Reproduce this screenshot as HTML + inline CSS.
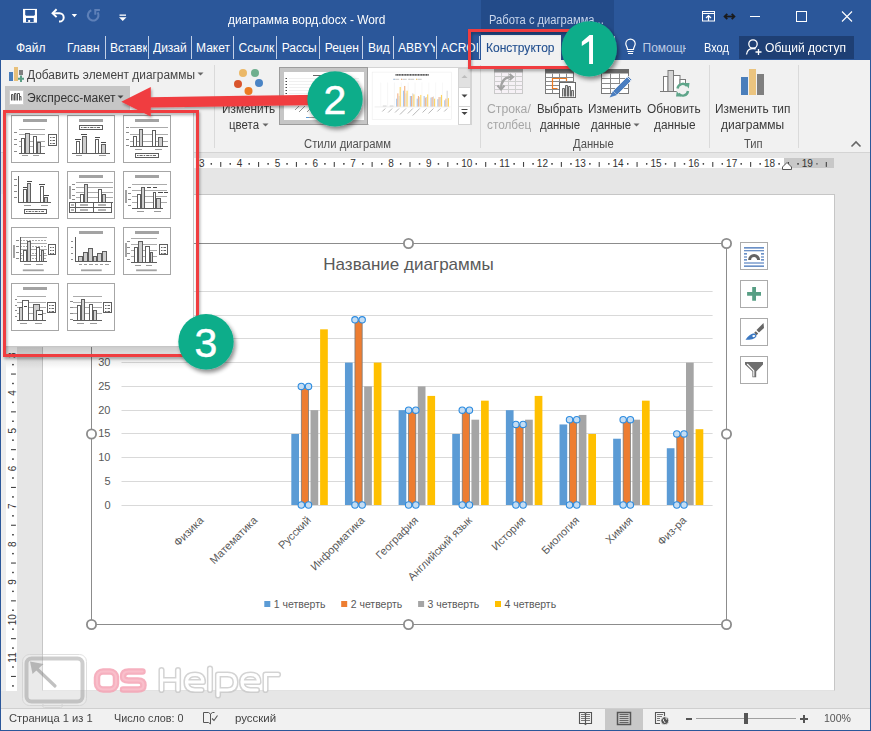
<!DOCTYPE html><html><head><meta charset="utf-8"><style>
html,body{margin:0;padding:0;}
body{width:871px;height:731px;overflow:hidden;position:relative;background:#E6E6E6;font-family:"Liberation Sans", sans-serif;}
.t{position:absolute;white-space:pre;line-height:1;font-family:"Liberation Sans", sans-serif;}
svg{position:absolute;overflow:visible;}
</style></head><body>
<div style="position:absolute;left:0px;top:0px;width:871px;height:60px;background:#2B579A;"></div><div style="position:absolute;left:481px;top:0px;width:133px;height:60px;background:#234B89;"></div><div class="t" style="left:489.4px;top:13.84px;font-size:12px;color:#C9D6EC;transform:scaleX(0.9293);transform-origin:0 0;">Работа с диаграмма...</div><div class="t" style="left:228px;top:13.84px;font-size:12px;color:#FFFFFF;transform:scaleX(0.9917);transform-origin:0 0;">диаграмма ворд.docx - Word</div><svg style="left:0px;top:0px;" width="140" height="35" viewBox="0 0 140 35">
<rect x="23" y="8.9" width="14" height="13.8" fill="#fff"/>
<path d="M25.2 10.1 H34.9 V14.8 L34 15.7 H26.1 L25.2 14.8Z" fill="#2B579A"/>
<path d="M26 18 H33.7 V21.9 H30.1 V20 H28.2 V21.9 H26Z" fill="#2B579A"/>
<path d="M53 13.2 H59.5 A4.2 4.2 0 0 1 59.5 21.6 H59" fill="none" stroke="#fff" stroke-width="2"/>
<path d="M56.6 9.3 L52.6 13.2 L56.6 17.1" fill="none" stroke="#fff" stroke-width="2"/>
<path d="M71.7 14 h5.4 l-2.7 3.2z" fill="#fff"/>
<path d="M91.3 10.3 A5.3 5.3 0 1 0 97.6 12.3" fill="none" stroke="#5E80B8" stroke-width="2.1"/>
<path d="M99.9 10 H95.3 V14.8" fill="none" stroke="#5E80B8" stroke-width="2"/>
<rect x="119.5" y="14.5" width="6.5" height="1.3" fill="#fff"/>
<path d="M119 17.3 h7.5 l-3.75 3.7z" fill="#fff"/>
</svg><svg style="left:690px;top:0px;" width="181" height="35" viewBox="0 0 181 35">
<rect x="12.5" y="11.5" width="12" height="9.5" fill="none" stroke="#fff" stroke-width="1"/>
<path d="M13 13.5 h11" stroke="#fff" stroke-width="1"/>
<path d="M18.5 21 v-5.5 M16 18 l2.5 -2.5 l2.5 2.5" fill="none" stroke="#fff" stroke-width="1.2"/>
<path d="M35.5 16.5 h8" stroke="#1a1a1a" stroke-width="1.8"/>
<path d="M37.3 13.8 l-2.7 2.7 l2.7 2.7 M41.7 13.8 l2.7 2.7 l-2.7 2.7" fill="none" stroke="#1a1a1a" stroke-width="1.8"/>
<path d="M60 16.5 h10" stroke="#fff" stroke-width="1"/>
<rect x="106.5" y="11.5" width="10" height="10" fill="none" stroke="#fff" stroke-width="1"/>
<path d="M152 11.5 l10 10 M162 11.5 l-10 10" stroke="#fff" stroke-width="1.1"/>
</svg><div class="t" style="left:16px;top:42.24px;font-size:12px;color:#fff;width:44px;overflow:hidden;">Файл</div><div class="t" style="left:67px;top:42.24px;font-size:12px;color:#fff;width:37px;overflow:hidden;">Главн</div><div class="t" style="left:110px;top:42.24px;font-size:12px;color:#fff;width:37px;overflow:hidden;">Вставк</div><div class="t" style="left:153px;top:42.24px;font-size:12px;color:#fff;width:37px;overflow:hidden;">Дизай</div><div class="t" style="left:196px;top:42.24px;font-size:12px;color:#fff;width:36px;overflow:hidden;">Макет</div><div class="t" style="left:238.6px;top:42.24px;font-size:12px;color:#fff;width:36.400000000000006px;overflow:hidden;">Ссылк</div><div class="t" style="left:281.7px;top:42.24px;font-size:12px;color:#fff;width:36.30000000000001px;overflow:hidden;">Рассы</div><div class="t" style="left:324.7px;top:42.24px;font-size:12px;color:#fff;width:36.30000000000001px;overflow:hidden;">Рецен</div><div class="t" style="left:368px;top:42.24px;font-size:12px;color:#fff;width:24px;overflow:hidden;">Вид</div><div class="t" style="left:398px;top:42.24px;font-size:12px;color:#fff;width:37px;overflow:hidden;">ABBYY</div><div class="t" style="left:441px;top:42.24px;font-size:12px;color:#fff;width:37px;overflow:hidden;">ACROI</div><div style="position:absolute;left:105px;top:36px;width:1px;height:23px;background:#C3D0E6;"></div><div style="position:absolute;left:148px;top:36px;width:1px;height:23px;background:#C3D0E6;"></div><div style="position:absolute;left:191px;top:36px;width:1px;height:23px;background:#C3D0E6;"></div><div style="position:absolute;left:233px;top:36px;width:1px;height:23px;background:#C3D0E6;"></div><div style="position:absolute;left:276px;top:36px;width:1px;height:23px;background:#C3D0E6;"></div><div style="position:absolute;left:319px;top:36px;width:1px;height:23px;background:#C3D0E6;"></div><div style="position:absolute;left:362px;top:36px;width:1px;height:23px;background:#C3D0E6;"></div><div style="position:absolute;left:393px;top:36px;width:1px;height:23px;background:#C3D0E6;"></div><div style="position:absolute;left:436px;top:36px;width:1px;height:23px;background:#C3D0E6;"></div><div style="position:absolute;left:479px;top:36px;width:1px;height:23px;background:#C3D0E6;"></div><div style="position:absolute;left:481px;top:35px;width:80px;height:25px;background:#F1F1F1;"></div><div style="position:absolute;left:561px;top:36px;width:1px;height:24px;background:#2A4C80;"></div><div style="position:absolute;left:614px;top:36px;width:1px;height:23px;background:#C3D0E6;"></div><div class="t" style="left:485.5px;top:42.24px;font-size:12px;color:#24508F;transform:scaleX(1.0012);transform-origin:0 0;-webkit-text-stroke:0.1px #24508F;">Конструктор</div><svg style="left:620px;top:36px;" width="20" height="22" viewBox="0 0 20 22">
<path d="M7.5 13.5 C7.5 11 5.8 10 5.8 7.8 A4.7 4.7 0 0 1 15.2 7.8 C15.2 10 13.5 11 13.5 13.5 Z" fill="none" stroke="#fff" stroke-width="1.2"/>
<path d="M7.5 15.5 h6 M8 17.5 h5" stroke="#fff" stroke-width="1.2"/>
</svg><div class="t" style="left:642.5px;top:42.24px;font-size:12px;color:#BFCDE5;width:43px;overflow:hidden;">Помощн</div><div class="t" style="left:704.2px;top:42.24px;font-size:12px;color:#fff;transform:scaleX(0.9173);transform-origin:0 0;">Вход</div><div style="position:absolute;left:739px;top:36px;width:115px;height:23px;background:#1E3F74;"></div><svg style="left:745px;top:38px;" width="20" height="20" viewBox="0 0 20 20">
<circle cx="8" cy="6" r="4.2" fill="none" stroke="#fff" stroke-width="1.3"/>
<path d="M1.5 16.5 C2 12.5 4.5 10.5 8 10.5 C9 10.5 10 10.7 10.8 11" fill="none" stroke="#fff" stroke-width="1.3"/>
<path d="M13.5 11 v6 M10.5 14 h6" stroke="#fff" stroke-width="1.3"/>
</svg><div class="t" style="left:765px;top:42.24px;font-size:12px;color:#fff;transform:scaleX(1.0047);transform-origin:0 0;">Общий доступ</div><div style="position:absolute;left:1px;top:60px;width:869px;height:92px;background:#F1F1F1;"></div><div style="position:absolute;left:1px;top:152px;width:869px;height:1px;background:#D4D4D4;"></div><div style="position:absolute;left:214px;top:65px;width:1px;height:83px;background:#DADADA;"></div><div style="position:absolute;left:480px;top:65px;width:1px;height:83px;background:#DADADA;"></div><div style="position:absolute;left:709px;top:65px;width:1px;height:83px;background:#DADADA;"></div><div style="position:absolute;left:798px;top:65px;width:1px;height:83px;background:#DADADA;"></div><svg style="left:8px;top:66px;" width="18" height="18" viewBox="0 0 18 18">
<rect x="1" y="6" width="4" height="9" fill="#4A7EBB"/>
<rect x="6" y="1" width="4" height="14" fill="#E8C07A"/>
<rect x="11" y="4" width="4" height="5" fill="#7F7F7F"/>
<path d="M13 9.5 v6.5 M10 12.8 h6" stroke="#5A9E85" stroke-width="2"/>
</svg><div class="t" style="left:26.5px;top:69.34px;font-size:12px;color:#444;transform:scaleX(0.9911);transform-origin:0 0;">Добавить элемент диаграммы</div><svg style="left:197px;top:72px;" width="8" height="5" viewBox="0 0 8 5"><path d="M0.5 0.5 h6 l-3 3z" fill="#666"/></svg><div style="position:absolute;left:5px;top:86px;width:125px;height:24px;background:#C6C6C6;"></div><div style="position:absolute;left:8.5px;top:89.5px;width:15px;height:15px;background:#fff;box-sizing:border-box;border:1px solid #D0D0D0;"></div><svg style="left:0px;top:0px;" width="100" height="120" viewBox="0 0 100 120">
<path d="M11.5 100.5 V94.5 H13 V100.5 M14.5 100.5 V93.5 H16 V100.5 M17.5 100.5 V93.5 H19.5 V100.5 M19.5 96.5 H21 V100.5" fill="none" stroke="#555" stroke-width="1"/>
</svg><div class="t" style="left:26.5px;top:92.04px;font-size:12px;color:#333;transform:scaleX(1.0065);transform-origin:0 0;">Экспресс-макет</div><svg style="left:117px;top:95px;" width="8" height="5" viewBox="0 0 8 5"><path d="M0.5 0.5 h6 l-3 3z" fill="#444"/></svg><svg style="left:230px;top:66px;" width="36" height="32" viewBox="0 0 36 32">
<circle cx="13" cy="7" r="4" fill="#EBB867"/>
<circle cx="25" cy="7" r="4" fill="#6FAF8E"/>
<circle cx="8" cy="18" r="4" fill="#D9542C"/>
<circle cx="29" cy="17" r="4" fill="#4A84C5"/>
<circle cx="18.5" cy="25" r="4" fill="#EC7A22"/>
</svg><div class="t" style="left:221.8px;top:102.84px;font-size:12px;color:#3A3A3A;transform:scaleX(0.9829);transform-origin:0 0;">Изменить</div><div class="t" style="left:229px;top:119.04px;font-size:12px;color:#3A3A3A;transform:scaleX(0.9547);transform-origin:0 0;">цвета</div><svg style="left:262px;top:123px;" width="8" height="5" viewBox="0 0 8 5"><path d="M0.5 0.5 h6 l-3 3z" fill="#666"/></svg><div style="position:absolute;left:278.5px;top:66.5px;width:193px;height:58.5px;background:#fff;box-sizing:border-box;border:1px solid #D4D4D4;"></div><div style="position:absolute;left:279px;top:66.5px;width:89px;height:58px;background:#C6C6C6;box-sizing:border-box;border:1px solid #9C9C9C;"></div><div style="position:absolute;left:284px;top:72px;width:80px;height:48px;background:#fff;"></div><div style="position:absolute;left:369px;top:67.5px;width:89px;height:57px;background:#fff;"></div><div style="position:absolute;left:457.5px;top:67.5px;width:13.5px;height:20px;background:#E1E1E1;box-sizing:border-box;border:1px solid #D4D4D4;"></div><div style="position:absolute;left:457.5px;top:87px;width:13.5px;height:19.5px;background:#fff;box-sizing:border-box;border:1px solid #D4D4D4;"></div><div style="position:absolute;left:457.5px;top:106px;width:13.5px;height:19px;background:#fff;box-sizing:border-box;border:1px solid #D4D4D4;"></div><svg style="left:458px;top:67px;" width="13" height="58" viewBox="0 0 13 58">
<path d="M3.5 11 l3 -3 l3 3z" fill="#BDBDBD"/>
<path d="M3.5 27.5 h6 l-3 3z" fill="#444"/>
<path d="M3.5 42.5 h6" stroke="#444" stroke-width="1"/>
<path d="M3.5 45 h6 l-3 3z" fill="#444"/>
</svg><svg style="left:0px;top:0px;" width="871" height="200" viewBox="0 0 871 200">
<path d="M285.5 78.5 h1.5 M285.5 81.5 h1.5 M285.5 84.5 h1.5 M285.5 87.5 h1.5 M285.5 90.5 h1.5 M285.5 93.5 h1.5" stroke="#444" stroke-width="1"/>
<path d="M289 78.5 h70 M289 81.5 h70 M289 84.5 h70 M289 87.5 h70 M289 90.5 h70 M289 93.5 h70" stroke="#F0F0F0" stroke-width="1"/>
<path d="M295 110 l4 -4 M299 112 l6 -6 M307 112 l4 -4" stroke="#777" stroke-width="0.8"/>
<path d="M306 117.5 h3" stroke="#5B9BD5" stroke-width="1"/><path d="M309 117.5 h8" stroke="#999" stroke-width="1"/>
<path d="M313 75.5 h20" stroke="#666" stroke-width="1"/>
</svg><svg style="left:0px;top:0px;" width="871" height="200" viewBox="0 0 871 200">
<rect x="372.2" y="72.1" width="79.4" height="47.4" fill="none" stroke="#EDEDED" stroke-width="0.6"/>
<path d="M395.5 74.9 H428.9" stroke="#555" stroke-width="1.6" stroke-dasharray="1.2 0.4"/>
<path d="M393.5 79.3 h1.2 M395.2 79.3 h4 M401 79.3 h1.2 M402.7 79.3 h4 M408.5 79.3 h1.2 M410.2 79.3 h4 M416 79.3 h1.2 M417.7 79.3 h4" stroke="#BBB" stroke-width="0.8"/>
<path d="M393.5 79.3 h1.2" stroke="#7FAEE0" stroke-width="0.9"/><path d="M401 79.3 h1.2" stroke="#F0A060" stroke-width="0.9"/><path d="M408.5 79.3 h1.2" stroke="#BBBBBB" stroke-width="0.9"/><path d="M416 79.3 h1.2" stroke="#FFC94A" stroke-width="0.9"/>
<path d="M374.6 106.9 H450.4" stroke="#DDD" stroke-width="0.5"/>
<path d="M380.70 82.5 V106.6" stroke="#F2F2F2" stroke-width="0.6"/><path d="M382.80 106 h3.8" stroke="#BBB" stroke-width="0.6"/><path d="M387.58 82.5 V106.6" stroke="#F2F2F2" stroke-width="0.6"/><path d="M389.68 106 h3.8" stroke="#BBB" stroke-width="0.6"/><path d="M394.46 82.5 V106.6" stroke="#F2F2F2" stroke-width="0.6"/><rect x="396.06" y="98.65" width="1.15" height="7.95" fill="#A9C8EC"/><rect x="397.26" y="93.35" width="1.15" height="13.25" fill="#F2B48A"/><rect x="398.46" y="96.00" width="1.15" height="10.60" fill="#D9D9D9"/><rect x="399.66" y="86.99" width="1.15" height="19.61" fill="#FFD45E"/><path d="M401.34 82.5 V106.6" stroke="#F2F2F2" stroke-width="0.6"/><rect x="402.94" y="90.70" width="1.15" height="15.90" fill="#A9C8EC"/><rect x="404.14" y="85.93" width="1.15" height="20.67" fill="#F2B48A"/><rect x="405.34" y="93.35" width="1.15" height="13.25" fill="#D9D9D9"/><rect x="406.54" y="90.70" width="1.15" height="15.90" fill="#FFD45E"/><path d="M408.21 82.5 V106.6" stroke="#F2F2F2" stroke-width="0.6"/><rect x="409.81" y="96.00" width="1.15" height="10.60" fill="#A9C8EC"/><rect x="411.01" y="96.00" width="1.15" height="10.60" fill="#F2B48A"/><rect x="412.21" y="93.35" width="1.15" height="13.25" fill="#D9D9D9"/><rect x="413.41" y="94.41" width="1.15" height="12.19" fill="#FFD45E"/><path d="M415.09 82.5 V106.6" stroke="#F2F2F2" stroke-width="0.6"/><rect x="416.69" y="98.65" width="1.15" height="7.95" fill="#A9C8EC"/><rect x="417.89" y="96.00" width="1.15" height="10.60" fill="#F2B48A"/><rect x="419.09" y="97.06" width="1.15" height="9.54" fill="#D9D9D9"/><rect x="420.29" y="94.94" width="1.15" height="11.66" fill="#FFD45E"/><path d="M421.97 82.5 V106.6" stroke="#F2F2F2" stroke-width="0.6"/><rect x="423.57" y="96.00" width="1.15" height="10.60" fill="#A9C8EC"/><rect x="424.77" y="97.59" width="1.15" height="9.01" fill="#F2B48A"/><rect x="425.97" y="97.06" width="1.15" height="9.54" fill="#D9D9D9"/><rect x="427.17" y="94.41" width="1.15" height="12.19" fill="#FFD45E"/><path d="M428.85 82.5 V106.6" stroke="#F2F2F2" stroke-width="0.6"/><rect x="430.45" y="97.59" width="1.15" height="9.01" fill="#A9C8EC"/><rect x="431.65" y="97.06" width="1.15" height="9.54" fill="#F2B48A"/><rect x="432.85" y="96.53" width="1.15" height="10.07" fill="#D9D9D9"/><rect x="434.05" y="98.65" width="1.15" height="7.95" fill="#FFD45E"/><path d="M435.73 82.5 V106.6" stroke="#F2F2F2" stroke-width="0.6"/><rect x="437.33" y="99.18" width="1.15" height="7.42" fill="#A9C8EC"/><rect x="438.53" y="97.06" width="1.15" height="9.54" fill="#F2B48A"/><rect x="439.73" y="97.06" width="1.15" height="9.54" fill="#D9D9D9"/><rect x="440.93" y="94.94" width="1.15" height="11.66" fill="#FFD45E"/><path d="M442.60 82.5 V106.6" stroke="#F2F2F2" stroke-width="0.6"/><rect x="444.20" y="100.24" width="1.15" height="6.36" fill="#A9C8EC"/><rect x="445.40" y="98.65" width="1.15" height="7.95" fill="#F2B48A"/><rect x="446.60" y="90.70" width="1.15" height="15.90" fill="#D9D9D9"/><rect x="447.80" y="98.12" width="1.15" height="8.48" fill="#FFD45E"/><path d="M385.30 108.5 l-3.0 3.0" stroke="#9A9A9A" stroke-width="0.7"/><path d="M392.18 108.5 l-4.0 4.0" stroke="#9A9A9A" stroke-width="0.7"/><path d="M399.06 108.5 l-4.0 4.0" stroke="#9A9A9A" stroke-width="0.7"/><path d="M405.94 108.5 l-6.0 6.0" stroke="#9A9A9A" stroke-width="0.7"/><path d="M412.81 108.5 l-5.0 5.0" stroke="#9A9A9A" stroke-width="0.7"/><path d="M419.69 108.5 l-7.0 7.0" stroke="#9A9A9A" stroke-width="0.7"/><path d="M426.57 108.5 l-4.0 4.0" stroke="#9A9A9A" stroke-width="0.7"/><path d="M433.45 108.5 l-5.0 5.0" stroke="#9A9A9A" stroke-width="0.7"/><path d="M440.33 108.5 l-3.0 3.0" stroke="#9A9A9A" stroke-width="0.7"/><path d="M447.20 108.5 l-3.0 3.0" stroke="#9A9A9A" stroke-width="0.7"/>
</svg><div style="position:absolute;left:457.5px;top:67px;width:0px;height:0px;background:#fff;"></div><div class="t" style="left:303.7px;top:138.04px;font-size:12px;color:#505050;transform:scaleX(0.9405);transform-origin:0 0;">Стили диаграмм</div><svg style="left:0px;top:0px;" width="871" height="200" viewBox="0 0 871 200">
<rect x="494.5" y="69.5" width="28" height="24" fill="#F6F1F6" stroke="#C9C9C9" stroke-width="1"/>
<rect x="494" y="69" width="29" height="3.5" fill="#A8A8A8"/>
<path d="M494.5 76.5 H522.5 M494.5 81.5 H522.5 M494.5 85.5 H522.5 M494.5 89.5 H522.5 M501.5 72.5 V93.5 M508.5 72.5 V93.5 M515.5 72.5 V93.5" stroke="#CFCFCF" stroke-width="1"/>
<path d="M501 89 C501 81 505 77 511.5 77" fill="none" stroke="#A3A3A3" stroke-width="2.2"/>
<path d="M509.5 74 L513 77 L509.5 80" fill="none" stroke="#A3A3A3" stroke-width="2"/>
<path d="M497.5 85.5 L501 89.5 L504.5 85.5" fill="none" stroke="#A3A3A3" stroke-width="2"/>
</svg><div class="t" style="left:487px;top:102.84px;font-size:12px;color:#A6A6A6;transform:scaleX(1.0179);transform-origin:0 0;">Строка/</div><div class="t" style="left:486.6px;top:118.84px;font-size:12px;color:#A6A6A6;transform:scaleX(0.9810);transform-origin:0 0;">столбец</div><svg style="left:0px;top:0px;" width="871" height="200" viewBox="0 0 871 200">
<rect x="545.5" y="69.5" width="28" height="24" fill="#fff" stroke="#7A7A7A" stroke-width="1"/>
<rect x="545" y="69" width="29" height="4.5" fill="#6A6A6A"/>
<path d="M545.5 77.5 H573.5 M545.5 81.5 H573.5 M545.5 85.5 H573.5 M545.5 89.5 H573.5 M552.5 73.5 V93.5 M559.5 73.5 V93.5 M566.5 73.5 V93.5" stroke="#8A8A8A" stroke-width="1"/>
<path d="M557.5 88.5 H552.5 V78.5 H566.5 V81" fill="none" stroke="#EC7A22" stroke-width="1.2"/>
<rect x="559.5" y="82.5" width="16" height="15" fill="#fff" stroke="#6A6A6A" stroke-width="1"/>
<path d="M562.5 96.5 V88.5 H564.5 V96.5 M565.5 96.5 V85.5 H567.5 V96.5 M568.5 96.5 V86.5 H570.5 V96.5 M571.5 96.5 V90.5 H573.5 V96.5" fill="#D0D0D0" stroke="#6A6A6A" stroke-width="1"/>
</svg><div class="t" style="left:536.6px;top:102.84px;font-size:12px;color:#3A3A3A;transform:scaleX(0.9497);transform-origin:0 0;">Выбрать</div><div class="t" style="left:539.5px;top:118.84px;font-size:12px;color:#3A3A3A;transform:scaleX(0.9497);transform-origin:0 0;">данные</div><svg style="left:0px;top:0px;" width="871" height="200" viewBox="0 0 871 200">
<rect x="601.5" y="69.5" width="27" height="24" fill="#fff" stroke="#7A7A7A" stroke-width="1"/>
<rect x="601" y="69" width="28" height="4.5" fill="#6A6A6A"/>
<path d="M601.5 78.5 H628.5 M601.5 83.5 H628.5 M601.5 88.5 H628.5 M610.5 73.5 V93.5 M619.5 73.5 V93.5" stroke="#8A8A8A" stroke-width="1"/>
<path d="M613 91 L628 76 L632 80 L617 95 Z" fill="#4A7EC0" stroke="#F1F1F1" stroke-width="0.8"/>
<path d="M613 91 L617 95 L609.6 97.6 Z" fill="#4A7EC0"/>
<path d="M627 77 L631 81" stroke="#fff" stroke-width="0.8"/>
</svg><div class="t" style="left:588.3px;top:102.84px;font-size:12px;color:#3A3A3A;transform:scaleX(0.9847);transform-origin:0 0;">Изменить</div><div class="t" style="left:591px;top:118.84px;font-size:12px;color:#3A3A3A;transform:scaleX(0.9497);transform-origin:0 0;">данные</div><svg style="left:633px;top:123px;" width="8" height="5" viewBox="0 0 8 5"><path d="M0.5 0.5 h6 l-3 3z" fill="#666"/></svg><svg style="left:0px;top:0px;" width="871" height="200" viewBox="0 0 871 200">
<rect x="663.5" y="76.5" width="4.5" height="15" fill="#fff" stroke="#7A7A7A" stroke-width="1"/>
<rect x="668" y="70.5" width="5.5" height="21" fill="#D4D4D4" stroke="#7A7A7A" stroke-width="1"/>
<rect x="673.5" y="75.5" width="6.5" height="16" fill="#fff" stroke="#7A7A7A" stroke-width="1"/>
<rect x="680" y="79.5" width="5.5" height="12" fill="#fff" stroke="#7A7A7A" stroke-width="1"/>
<path d="M660 91.5 H680" stroke="#7A7A7A" stroke-width="1"/>
<circle cx="682.8" cy="89.8" r="6.5" fill="#F1F1F1"/>
<path d="M677.5 88.5 A5.3 5.3 0 0 1 687 86" fill="none" stroke="#5FA58A" stroke-width="2.4"/>
<path d="M688 91 A5.3 5.3 0 0 1 678.6 93.6" fill="none" stroke="#5FA58A" stroke-width="2.4"/>
<path d="M684.5 83 L689.5 83 L688.8 88.5 Z" fill="#5FA58A"/>
<path d="M681 96.6 L676 96.6 L676.8 91.2 Z" fill="#5FA58A"/>
</svg><div class="t" style="left:647.4px;top:102.84px;font-size:12px;color:#3A3A3A;transform:scaleX(0.9865);transform-origin:0 0;">Обновить</div><div class="t" style="left:653.7px;top:118.84px;font-size:12px;color:#3A3A3A;transform:scaleX(0.9852);transform-origin:0 0;">данные</div><div class="t" style="left:573.3px;top:138.04px;font-size:12px;color:#505050;transform:scaleX(0.9389);transform-origin:0 0;">Данные</div><div style="position:absolute;left:741px;top:77px;width:7px;height:18px;background:#4A7EBB;"></div><div style="position:absolute;left:749px;top:69px;width:7px;height:26px;background:#EBC47F;"></div><div style="position:absolute;left:757px;top:74px;width:7px;height:21px;background:#7F7F7F;"></div><div class="t" style="left:715.3px;top:103.24px;font-size:12px;color:#3A3A3A;transform:scaleX(0.9901);transform-origin:0 0;">Изменить тип</div><div class="t" style="left:721.2px;top:119.04px;font-size:12px;color:#3A3A3A;transform:scaleX(0.9996);transform-origin:0 0;">диаграммы</div><div class="t" style="left:744.2px;top:138.04px;font-size:12px;color:#505050;transform:scaleX(0.9298);transform-origin:0 0;">Тип</div><svg style="left:850px;top:140px;" width="12" height="8" viewBox="0 0 12 8"><path d="M1.5 6.5 l4.5 -4.5 l4.5 4.5" fill="none" stroke="#666" stroke-width="1.6"/></svg><div style="position:absolute;left:42px;top:158px;width:742px;height:10px;background:#FFFFFF;"></div><div style="position:absolute;left:784px;top:158px;width:50px;height:10px;background:#C8C8C8;"></div><svg style="left:0px;top:0px;" width="871" height="200" viewBox="0 0 871 200"><rect x="59.31" y="163.2" width="1.3" height="1.3" fill="#444"/><rect x="78.24" y="163.2" width="1.3" height="1.3" fill="#444"/><rect x="97.16" y="163.2" width="1.3" height="1.3" fill="#444"/><rect x="116.09" y="163.2" width="1.3" height="1.3" fill="#444"/><rect x="106.62" y="162" width="1.1" height="4.9" fill="#444"/><text font-family="Liberation Sans" x="126.05" y="167" text-anchor="middle" font-size="10" fill="#333">1</text><rect x="97.16" y="163.2" width="1.3" height="1.3" fill="#444"/><rect x="116.09" y="163.2" width="1.3" height="1.3" fill="#444"/><rect x="135.01" y="163.2" width="1.3" height="1.3" fill="#444"/><rect x="153.94" y="163.2" width="1.3" height="1.3" fill="#444"/><rect x="144.48" y="162" width="1.1" height="4.9" fill="#444"/><text font-family="Liberation Sans" x="163.90" y="167" text-anchor="middle" font-size="10" fill="#333">2</text><rect x="135.01" y="163.2" width="1.3" height="1.3" fill="#444"/><rect x="153.94" y="163.2" width="1.3" height="1.3" fill="#444"/><rect x="172.86" y="163.2" width="1.3" height="1.3" fill="#444"/><rect x="191.79" y="163.2" width="1.3" height="1.3" fill="#444"/><rect x="182.33" y="162" width="1.1" height="4.9" fill="#444"/><text font-family="Liberation Sans" x="201.75" y="167" text-anchor="middle" font-size="10" fill="#333">3</text><rect x="172.86" y="163.2" width="1.3" height="1.3" fill="#444"/><rect x="191.79" y="163.2" width="1.3" height="1.3" fill="#444"/><rect x="210.71" y="163.2" width="1.3" height="1.3" fill="#444"/><rect x="229.64" y="163.2" width="1.3" height="1.3" fill="#444"/><rect x="220.18" y="162" width="1.1" height="4.9" fill="#444"/><text font-family="Liberation Sans" x="239.60" y="167" text-anchor="middle" font-size="10" fill="#333">4</text><rect x="210.71" y="163.2" width="1.3" height="1.3" fill="#444"/><rect x="229.64" y="163.2" width="1.3" height="1.3" fill="#444"/><rect x="248.56" y="163.2" width="1.3" height="1.3" fill="#444"/><rect x="267.49" y="163.2" width="1.3" height="1.3" fill="#444"/><rect x="258.03" y="162" width="1.1" height="4.9" fill="#444"/><text font-family="Liberation Sans" x="277.45" y="167" text-anchor="middle" font-size="10" fill="#333">5</text><rect x="248.56" y="163.2" width="1.3" height="1.3" fill="#444"/><rect x="267.49" y="163.2" width="1.3" height="1.3" fill="#444"/><rect x="286.41" y="163.2" width="1.3" height="1.3" fill="#444"/><rect x="305.34" y="163.2" width="1.3" height="1.3" fill="#444"/><rect x="295.88" y="162" width="1.1" height="4.9" fill="#444"/><text font-family="Liberation Sans" x="315.30" y="167" text-anchor="middle" font-size="10" fill="#333">6</text><rect x="286.41" y="163.2" width="1.3" height="1.3" fill="#444"/><rect x="305.34" y="163.2" width="1.3" height="1.3" fill="#444"/><rect x="324.26" y="163.2" width="1.3" height="1.3" fill="#444"/><rect x="343.19" y="163.2" width="1.3" height="1.3" fill="#444"/><rect x="333.73" y="162" width="1.1" height="4.9" fill="#444"/><text font-family="Liberation Sans" x="353.15" y="167" text-anchor="middle" font-size="10" fill="#333">7</text><rect x="324.26" y="163.2" width="1.3" height="1.3" fill="#444"/><rect x="343.19" y="163.2" width="1.3" height="1.3" fill="#444"/><rect x="362.11" y="163.2" width="1.3" height="1.3" fill="#444"/><rect x="381.04" y="163.2" width="1.3" height="1.3" fill="#444"/><rect x="371.58" y="162" width="1.1" height="4.9" fill="#444"/><text font-family="Liberation Sans" x="391.00" y="167" text-anchor="middle" font-size="10" fill="#333">8</text><rect x="362.11" y="163.2" width="1.3" height="1.3" fill="#444"/><rect x="381.04" y="163.2" width="1.3" height="1.3" fill="#444"/><rect x="399.96" y="163.2" width="1.3" height="1.3" fill="#444"/><rect x="418.89" y="163.2" width="1.3" height="1.3" fill="#444"/><rect x="409.43" y="162" width="1.1" height="4.9" fill="#444"/><text font-family="Liberation Sans" x="428.85" y="167" text-anchor="middle" font-size="10" fill="#333">9</text><rect x="399.96" y="163.2" width="1.3" height="1.3" fill="#444"/><rect x="418.89" y="163.2" width="1.3" height="1.3" fill="#444"/><rect x="437.81" y="163.2" width="1.3" height="1.3" fill="#444"/><rect x="456.74" y="163.2" width="1.3" height="1.3" fill="#444"/><rect x="447.28" y="162" width="1.1" height="4.9" fill="#444"/><text font-family="Liberation Sans" x="466.70" y="167" text-anchor="middle" font-size="10" fill="#333">10</text><rect x="437.81" y="163.2" width="1.3" height="1.3" fill="#444"/><rect x="456.74" y="163.2" width="1.3" height="1.3" fill="#444"/><rect x="475.66" y="163.2" width="1.3" height="1.3" fill="#444"/><rect x="494.59" y="163.2" width="1.3" height="1.3" fill="#444"/><rect x="485.13" y="162" width="1.1" height="4.9" fill="#444"/><text font-family="Liberation Sans" x="504.55" y="167" text-anchor="middle" font-size="10" fill="#333">11</text><rect x="475.66" y="163.2" width="1.3" height="1.3" fill="#444"/><rect x="494.59" y="163.2" width="1.3" height="1.3" fill="#444"/><rect x="513.51" y="163.2" width="1.3" height="1.3" fill="#444"/><rect x="532.44" y="163.2" width="1.3" height="1.3" fill="#444"/><rect x="522.98" y="162" width="1.1" height="4.9" fill="#444"/><text font-family="Liberation Sans" x="542.40" y="167" text-anchor="middle" font-size="10" fill="#333">12</text><rect x="513.51" y="163.2" width="1.3" height="1.3" fill="#444"/><rect x="532.44" y="163.2" width="1.3" height="1.3" fill="#444"/><rect x="551.36" y="163.2" width="1.3" height="1.3" fill="#444"/><rect x="570.29" y="163.2" width="1.3" height="1.3" fill="#444"/><rect x="560.83" y="162" width="1.1" height="4.9" fill="#444"/><text font-family="Liberation Sans" x="580.25" y="167" text-anchor="middle" font-size="10" fill="#333">13</text><rect x="551.36" y="163.2" width="1.3" height="1.3" fill="#444"/><rect x="570.29" y="163.2" width="1.3" height="1.3" fill="#444"/><rect x="589.21" y="163.2" width="1.3" height="1.3" fill="#444"/><rect x="608.14" y="163.2" width="1.3" height="1.3" fill="#444"/><rect x="598.67" y="162" width="1.1" height="4.9" fill="#444"/><text font-family="Liberation Sans" x="618.10" y="167" text-anchor="middle" font-size="10" fill="#333">14</text><rect x="589.21" y="163.2" width="1.3" height="1.3" fill="#444"/><rect x="608.14" y="163.2" width="1.3" height="1.3" fill="#444"/><rect x="627.06" y="163.2" width="1.3" height="1.3" fill="#444"/><rect x="645.99" y="163.2" width="1.3" height="1.3" fill="#444"/><rect x="636.52" y="162" width="1.1" height="4.9" fill="#444"/><text font-family="Liberation Sans" x="655.95" y="167" text-anchor="middle" font-size="10" fill="#333">15</text><rect x="627.06" y="163.2" width="1.3" height="1.3" fill="#444"/><rect x="645.99" y="163.2" width="1.3" height="1.3" fill="#444"/><rect x="664.91" y="163.2" width="1.3" height="1.3" fill="#444"/><rect x="683.84" y="163.2" width="1.3" height="1.3" fill="#444"/><rect x="674.38" y="162" width="1.1" height="4.9" fill="#444"/><text font-family="Liberation Sans" x="693.80" y="167" text-anchor="middle" font-size="10" fill="#333">16</text><rect x="664.91" y="163.2" width="1.3" height="1.3" fill="#444"/><rect x="683.84" y="163.2" width="1.3" height="1.3" fill="#444"/><rect x="702.76" y="163.2" width="1.3" height="1.3" fill="#444"/><rect x="721.69" y="163.2" width="1.3" height="1.3" fill="#444"/><rect x="712.22" y="162" width="1.1" height="4.9" fill="#444"/><text font-family="Liberation Sans" x="731.65" y="167" text-anchor="middle" font-size="10" fill="#333">17</text><rect x="702.76" y="163.2" width="1.3" height="1.3" fill="#444"/><rect x="721.69" y="163.2" width="1.3" height="1.3" fill="#444"/><rect x="740.61" y="163.2" width="1.3" height="1.3" fill="#444"/><rect x="759.54" y="163.2" width="1.3" height="1.3" fill="#444"/><rect x="750.08" y="162" width="1.1" height="4.9" fill="#444"/><text font-family="Liberation Sans" x="769.50" y="167" text-anchor="middle" font-size="10" fill="#333">18</text><rect x="740.61" y="163.2" width="1.3" height="1.3" fill="#444"/><rect x="759.54" y="163.2" width="1.3" height="1.3" fill="#444"/><rect x="778.46" y="163.2" width="1.3" height="1.3" fill="#444"/><rect x="797.39" y="163.2" width="1.3" height="1.3" fill="#444"/><rect x="787.92" y="162" width="1.1" height="4.9" fill="#444"/><text font-family="Liberation Sans" x="807.35" y="167" text-anchor="middle" font-size="10" fill="#333">19</text><rect x="778.46" y="163.2" width="1.3" height="1.3" fill="#444"/><rect x="797.39" y="163.2" width="1.3" height="1.3" fill="#444"/><rect x="816.31" y="163.2" width="1.3" height="1.3" fill="#444"/><rect x="825.77" y="162" width="1.1" height="4.9" fill="#444"/></svg><svg style="left:781px;top:160px;" width="12" height="12" viewBox="0 0 12 12"><path d="M1.5 9.5 v-2.5 l4.5 -4.5 l4.5 4.5 v2.5 z" fill="#fff" stroke="#555" stroke-width="1"/></svg><div style="position:absolute;left:6px;top:194px;width:11px;height:497px;background:#FFFFFF;"></div><svg style="left:0px;top:0px;" width="40" height="731" viewBox="0 0 40 731"><text transform="translate(16.1 279.50) rotate(-90)" text-anchor="middle" font-size="10" fill="#333" font-family="Liberation Sans">1</text><rect x="12.3" y="250.55" width="1.3" height="1.3" fill="#444"/><rect x="12.3" y="269.45" width="1.3" height="1.3" fill="#444"/><rect x="12.3" y="288.35" width="1.3" height="1.3" fill="#444"/><rect x="12.3" y="307.25" width="1.3" height="1.3" fill="#444"/><rect x="11" y="297.90" width="4.9" height="1.1" fill="#444"/><text transform="translate(16.1 317.30) rotate(-90)" text-anchor="middle" font-size="10" fill="#333" font-family="Liberation Sans">2</text><rect x="12.3" y="288.35" width="1.3" height="1.3" fill="#444"/><rect x="12.3" y="307.25" width="1.3" height="1.3" fill="#444"/><rect x="12.3" y="326.15" width="1.3" height="1.3" fill="#444"/><rect x="12.3" y="345.05" width="1.3" height="1.3" fill="#444"/><rect x="11" y="335.70" width="4.9" height="1.1" fill="#444"/><text transform="translate(16.1 355.10) rotate(-90)" text-anchor="middle" font-size="10" fill="#333" font-family="Liberation Sans">3</text><rect x="12.3" y="326.15" width="1.3" height="1.3" fill="#444"/><rect x="12.3" y="345.05" width="1.3" height="1.3" fill="#444"/><rect x="12.3" y="363.95" width="1.3" height="1.3" fill="#444"/><rect x="12.3" y="382.85" width="1.3" height="1.3" fill="#444"/><rect x="11" y="373.50" width="4.9" height="1.1" fill="#444"/><text transform="translate(16.1 392.90) rotate(-90)" text-anchor="middle" font-size="10" fill="#333" font-family="Liberation Sans">4</text><rect x="12.3" y="363.95" width="1.3" height="1.3" fill="#444"/><rect x="12.3" y="382.85" width="1.3" height="1.3" fill="#444"/><rect x="12.3" y="401.75" width="1.3" height="1.3" fill="#444"/><rect x="12.3" y="420.65" width="1.3" height="1.3" fill="#444"/><rect x="11" y="411.30" width="4.9" height="1.1" fill="#444"/><text transform="translate(16.1 430.70) rotate(-90)" text-anchor="middle" font-size="10" fill="#333" font-family="Liberation Sans">5</text><rect x="12.3" y="401.75" width="1.3" height="1.3" fill="#444"/><rect x="12.3" y="420.65" width="1.3" height="1.3" fill="#444"/><rect x="12.3" y="439.55" width="1.3" height="1.3" fill="#444"/><rect x="12.3" y="458.45" width="1.3" height="1.3" fill="#444"/><rect x="11" y="449.10" width="4.9" height="1.1" fill="#444"/><text transform="translate(16.1 468.50) rotate(-90)" text-anchor="middle" font-size="10" fill="#333" font-family="Liberation Sans">6</text><rect x="12.3" y="439.55" width="1.3" height="1.3" fill="#444"/><rect x="12.3" y="458.45" width="1.3" height="1.3" fill="#444"/><rect x="12.3" y="477.35" width="1.3" height="1.3" fill="#444"/><rect x="12.3" y="496.25" width="1.3" height="1.3" fill="#444"/><rect x="11" y="486.90" width="4.9" height="1.1" fill="#444"/><text transform="translate(16.1 506.30) rotate(-90)" text-anchor="middle" font-size="10" fill="#333" font-family="Liberation Sans">7</text><rect x="12.3" y="477.35" width="1.3" height="1.3" fill="#444"/><rect x="12.3" y="496.25" width="1.3" height="1.3" fill="#444"/><rect x="12.3" y="515.15" width="1.3" height="1.3" fill="#444"/><rect x="12.3" y="534.05" width="1.3" height="1.3" fill="#444"/><rect x="11" y="524.70" width="4.9" height="1.1" fill="#444"/><text transform="translate(16.1 544.10) rotate(-90)" text-anchor="middle" font-size="10" fill="#333" font-family="Liberation Sans">8</text><rect x="12.3" y="515.15" width="1.3" height="1.3" fill="#444"/><rect x="12.3" y="534.05" width="1.3" height="1.3" fill="#444"/><rect x="12.3" y="552.95" width="1.3" height="1.3" fill="#444"/><rect x="12.3" y="571.85" width="1.3" height="1.3" fill="#444"/><rect x="11" y="562.50" width="4.9" height="1.1" fill="#444"/><text transform="translate(16.1 581.90) rotate(-90)" text-anchor="middle" font-size="10" fill="#333" font-family="Liberation Sans">9</text><rect x="12.3" y="552.95" width="1.3" height="1.3" fill="#444"/><rect x="12.3" y="571.85" width="1.3" height="1.3" fill="#444"/><rect x="12.3" y="590.75" width="1.3" height="1.3" fill="#444"/><rect x="12.3" y="609.65" width="1.3" height="1.3" fill="#444"/><rect x="11" y="600.30" width="4.9" height="1.1" fill="#444"/><text transform="translate(16.1 619.70) rotate(-90)" text-anchor="middle" font-size="10" fill="#333" font-family="Liberation Sans">10</text><rect x="12.3" y="590.75" width="1.3" height="1.3" fill="#444"/><rect x="12.3" y="609.65" width="1.3" height="1.3" fill="#444"/><rect x="12.3" y="628.55" width="1.3" height="1.3" fill="#444"/><rect x="12.3" y="647.45" width="1.3" height="1.3" fill="#444"/><rect x="11" y="638.10" width="4.9" height="1.1" fill="#444"/><text transform="translate(16.1 657.50) rotate(-90)" text-anchor="middle" font-size="10" fill="#333" font-family="Liberation Sans">11</text><rect x="12.3" y="628.55" width="1.3" height="1.3" fill="#444"/><rect x="12.3" y="647.45" width="1.3" height="1.3" fill="#444"/><rect x="12.3" y="666.35" width="1.3" height="1.3" fill="#444"/><rect x="12.3" y="685.25" width="1.3" height="1.3" fill="#444"/><rect x="11" y="675.90" width="4.9" height="1.1" fill="#444"/><rect x="12.3" y="666.35" width="1.3" height="1.3" fill="#444"/><rect x="12.3" y="685.25" width="1.3" height="1.3" fill="#444"/></svg><div style="position:absolute;left:42px;top:194px;width:793px;height:497px;background:#FFFFFF;box-sizing:border-box;border-left:1px solid #C6C6C6;border-top:1px solid #C6C6C6;border-right:1px solid #C6C6C6;border-bottom:1px solid #E2E2E2;"></div><div style="position:absolute;left:1px;top:709px;width:869px;height:21px;background:#F1F1F1;"></div><div style="position:absolute;left:1px;top:708px;width:869px;height:1px;background:#CFCFCF;"></div><div style="position:absolute;left:0px;top:730px;width:871px;height:1px;background:#2B579A;"></div><div class="t" style="left:9.3px;top:713.29px;font-size:11px;color:#444;transform:scaleX(1.0153);transform-origin:0 0;">Страница 1 из 1</div><div class="t" style="left:114px;top:713.29px;font-size:11px;color:#444;transform:scaleX(0.9814);transform-origin:0 0;">Число слов: 0</div><svg style="left:202px;top:710px;" width="18" height="16" viewBox="0 0 18 16">
<path d="M1.5 2.5 h5 l2 1.5 v10 l-2 -1.5 h-5z M8.5 4 l2 -1.5 h2" fill="none" stroke="#555" stroke-width="1"/>
<path d="M10 8.5 l2 2 l3.5 -5" fill="none" stroke="#555" stroke-width="1.1"/>
</svg><div class="t" style="left:234.6px;top:713.29px;font-size:11px;color:#444;transform:scaleX(1.0438);transform-origin:0 0;">русский</div><div style="position:absolute;left:605px;top:709px;width:38px;height:21px;background:#C8C8C8;"></div><svg style="left:0px;top:0px;" width="871" height="731" viewBox="0 0 871 731">
<path d="M579.5 712.5 h5 l1 1 l1 -1 h5 v11 h-5 l-1 1 l-1 -1 h-5z M585.5 713.5 v11" fill="none" stroke="#555" stroke-width="1.1"/>
<path d="M581 714.5 h4 M581 716.5 h4 M581 718.5 h4 M581 720.5 h4 M586 714.5 h4 M586 716.5 h4 M586 718.5 h4 M586 720.5 h4" stroke="#777" stroke-width="1"/>
<rect x="617.5" y="712.5" width="13" height="12" fill="none" stroke="#555" stroke-width="1.5"/>
<path d="M619.5 714.5 h9 M619.5 716.5 h9 M619.5 718.5 h9 M619.5 720.5 h9 M619.5 722.5 h9" stroke="#666" stroke-width="1"/>
<path d="M664.5 716 V712.5 H655.5 V723.5 H660" fill="none" stroke="#555" stroke-width="1.1"/>
<path d="M657 714.5 h6 M657 716.5 h5 M657 718.5 h3 M657 720.5 h3" stroke="#777" stroke-width="1"/>
<circle cx="664.8" cy="720.7" r="4" fill="#555" stroke="#F1F1F1" stroke-width="0.8"/>
<path d="M662.5 718.5 q1.5 1 1 2.5 q1.5 0.5 1.5 2 M666 717.5 q-0.5 1.5 1 2" fill="none" stroke="#fff" stroke-width="0.9"/>
</svg><div style="position:absolute;left:686px;top:718px;width:6px;height:2px;background:#555;"></div><div style="position:absolute;left:696px;top:718px;width:100px;height:1px;background:#A0A0A0;"></div><div style="position:absolute;left:744px;top:713px;width:4px;height:11px;background:#555;"></div><div style="position:absolute;left:800px;top:718px;width:8px;height:2px;background:#555;"></div><div style="position:absolute;left:803px;top:715px;width:2px;height:8px;background:#555;"></div><div class="t" style="left:824px;top:713.29px;font-size:11px;color:#555;transform:scaleX(0.9597);transform-origin:0 0;">100%</div><div style="position:absolute;left:1px;top:194px;width:5px;height:497px;background:#EDEDED;"></div><svg style="left:0px;top:0px;" width="871" height="731" viewBox="0 0 871 731"><path d="M121.5 505.5 H712.6" stroke="#D9D9D9" stroke-width="1"/><text x="110.5" y="508.6" text-anchor="end" font-size="11" fill="#595959" font-family="Liberation Sans">0</text><path d="M121.5 481.5 H712.6" stroke="#D9D9D9" stroke-width="1"/><text x="110.5" y="484.6" text-anchor="end" font-size="11" fill="#595959" font-family="Liberation Sans">5</text><path d="M121.5 457.5 H712.6" stroke="#D9D9D9" stroke-width="1"/><text x="110.5" y="460.6" text-anchor="end" font-size="11" fill="#595959" font-family="Liberation Sans">10</text><path d="M121.5 433.5 H712.6" stroke="#D9D9D9" stroke-width="1"/><text x="110.5" y="436.6" text-anchor="end" font-size="11" fill="#595959" font-family="Liberation Sans">15</text><path d="M121.5 410.5 H712.6" stroke="#D9D9D9" stroke-width="1"/><text x="110.5" y="413.6" text-anchor="end" font-size="11" fill="#595959" font-family="Liberation Sans">20</text><path d="M121.5 386.5 H712.6" stroke="#D9D9D9" stroke-width="1"/><text x="110.5" y="389.6" text-anchor="end" font-size="11" fill="#595959" font-family="Liberation Sans">25</text><path d="M121.5 362.5 H712.6" stroke="#D9D9D9" stroke-width="1"/><text x="110.5" y="365.6" text-anchor="end" font-size="11" fill="#595959" font-family="Liberation Sans">30</text><path d="M121.5 338.5 H712.6" stroke="#D9D9D9" stroke-width="1"/><text x="110.5" y="341.6" text-anchor="end" font-size="11" fill="#595959" font-family="Liberation Sans">35</text><path d="M121.5 315.5 H712.6" stroke="#D9D9D9" stroke-width="1"/><text x="110.5" y="318.6" text-anchor="end" font-size="11" fill="#595959" font-family="Liberation Sans">40</text><path d="M121.5 291.5 H712.6" stroke="#D9D9D9" stroke-width="1"/><text x="110.5" y="294.6" text-anchor="end" font-size="11" fill="#595959" font-family="Liberation Sans">45</text><rect x="291.32" y="433.96" width="7.7" height="71.04" fill="#5B9BD5"/><rect x="301.32" y="386.40" width="7.2" height="118.60" fill="#ED7D31" stroke="#7A7A7A" stroke-width="0.8"/><rect x="310.52" y="410.18" width="7.7" height="94.82" fill="#A5A5A5"/><rect x="320.12" y="329.33" width="7.7" height="175.67" fill="#FFC000"/><rect x="344.96" y="362.62" width="7.7" height="142.38" fill="#5B9BD5"/><rect x="354.96" y="319.82" width="7.2" height="185.18" fill="#ED7D31" stroke="#7A7A7A" stroke-width="0.8"/><rect x="364.16" y="386.40" width="7.7" height="118.60" fill="#A5A5A5"/><rect x="373.76" y="362.62" width="7.7" height="142.38" fill="#FFC000"/><rect x="398.60" y="410.18" width="7.7" height="94.82" fill="#5B9BD5"/><rect x="408.60" y="410.18" width="7.2" height="94.82" fill="#ED7D31" stroke="#7A7A7A" stroke-width="0.8"/><rect x="417.80" y="386.40" width="7.7" height="118.60" fill="#A5A5A5"/><rect x="427.40" y="395.91" width="7.7" height="109.09" fill="#FFC000"/><rect x="452.24" y="433.96" width="7.7" height="71.04" fill="#5B9BD5"/><rect x="462.24" y="410.18" width="7.2" height="94.82" fill="#ED7D31" stroke="#7A7A7A" stroke-width="0.8"/><rect x="471.44" y="419.69" width="7.7" height="85.31" fill="#A5A5A5"/><rect x="481.04" y="400.67" width="7.7" height="104.33" fill="#FFC000"/><rect x="505.88" y="410.18" width="7.7" height="94.82" fill="#5B9BD5"/><rect x="515.88" y="424.45" width="7.2" height="80.55" fill="#ED7D31" stroke="#7A7A7A" stroke-width="0.8"/><rect x="525.08" y="419.69" width="7.7" height="85.31" fill="#A5A5A5"/><rect x="534.68" y="395.91" width="7.7" height="109.09" fill="#FFC000"/><rect x="559.52" y="424.45" width="7.7" height="80.55" fill="#5B9BD5"/><rect x="569.52" y="419.69" width="7.2" height="85.31" fill="#ED7D31" stroke="#7A7A7A" stroke-width="0.8"/><rect x="578.72" y="414.94" width="7.7" height="90.06" fill="#A5A5A5"/><rect x="588.32" y="433.96" width="7.7" height="71.04" fill="#FFC000"/><rect x="613.16" y="438.72" width="7.7" height="66.28" fill="#5B9BD5"/><rect x="623.16" y="419.69" width="7.2" height="85.31" fill="#ED7D31" stroke="#7A7A7A" stroke-width="0.8"/><rect x="632.36" y="419.69" width="7.7" height="85.31" fill="#A5A5A5"/><rect x="641.96" y="400.67" width="7.7" height="104.33" fill="#FFC000"/><rect x="666.80" y="448.23" width="7.7" height="56.77" fill="#5B9BD5"/><rect x="676.80" y="433.96" width="7.2" height="71.04" fill="#ED7D31" stroke="#7A7A7A" stroke-width="0.8"/><rect x="686.00" y="362.62" width="7.7" height="142.38" fill="#A5A5A5"/><rect x="695.60" y="429.20" width="7.7" height="75.80" fill="#FFC000"/><g fill="#C5DDF3" stroke="#2D8CE0" stroke-width="1.1"><circle cx="301.32" cy="386.40" r="3.2"/><circle cx="308.52" cy="386.40" r="3.2"/><circle cx="301.32" cy="505" r="3.2"/><circle cx="308.52" cy="505" r="3.2"/><circle cx="354.96" cy="319.82" r="3.2"/><circle cx="362.16" cy="319.82" r="3.2"/><circle cx="354.96" cy="505" r="3.2"/><circle cx="362.16" cy="505" r="3.2"/><circle cx="408.60" cy="410.18" r="3.2"/><circle cx="415.80" cy="410.18" r="3.2"/><circle cx="408.60" cy="505" r="3.2"/><circle cx="415.80" cy="505" r="3.2"/><circle cx="462.24" cy="410.18" r="3.2"/><circle cx="469.44" cy="410.18" r="3.2"/><circle cx="462.24" cy="505" r="3.2"/><circle cx="469.44" cy="505" r="3.2"/><circle cx="515.88" cy="424.45" r="3.2"/><circle cx="523.08" cy="424.45" r="3.2"/><circle cx="515.88" cy="505" r="3.2"/><circle cx="523.08" cy="505" r="3.2"/><circle cx="569.52" cy="419.69" r="3.2"/><circle cx="576.72" cy="419.69" r="3.2"/><circle cx="569.52" cy="505" r="3.2"/><circle cx="576.72" cy="505" r="3.2"/><circle cx="623.16" cy="419.69" r="3.2"/><circle cx="630.36" cy="419.69" r="3.2"/><circle cx="623.16" cy="505" r="3.2"/><circle cx="630.36" cy="505" r="3.2"/><circle cx="676.80" cy="433.96" r="3.2"/><circle cx="684.00" cy="433.96" r="3.2"/><circle cx="676.80" cy="505" r="3.2"/><circle cx="684.00" cy="505" r="3.2"/></g><text transform="translate(204.36 521) rotate(-45)" text-anchor="end" font-size="11" fill="#595959" font-family="Liberation Sans">Физика</text><text transform="translate(258.00 521) rotate(-45)" text-anchor="end" font-size="11" fill="#595959" font-family="Liberation Sans">Математика</text><text transform="translate(311.64 521) rotate(-45)" text-anchor="end" font-size="11" fill="#595959" font-family="Liberation Sans">Русский</text><text transform="translate(365.28 521) rotate(-45)" text-anchor="end" font-size="11" fill="#595959" font-family="Liberation Sans">Информатика</text><text transform="translate(418.92 521) rotate(-45)" text-anchor="end" font-size="11" fill="#595959" font-family="Liberation Sans">География</text><text transform="translate(472.56 521) rotate(-45)" text-anchor="end" font-size="11" fill="#595959" font-family="Liberation Sans">Английский язык</text><text transform="translate(526.20 521) rotate(-45)" text-anchor="end" font-size="11" fill="#595959" font-family="Liberation Sans">История</text><text transform="translate(579.84 521) rotate(-45)" text-anchor="end" font-size="11" fill="#595959" font-family="Liberation Sans">Биология</text><text transform="translate(633.48 521) rotate(-45)" text-anchor="end" font-size="11" fill="#595959" font-family="Liberation Sans">Химия</text><text transform="translate(687.12 521) rotate(-45)" text-anchor="end" font-size="11" fill="#595959" font-family="Liberation Sans">Физ-ра</text><text x="323.3" y="270" font-size="17" fill="#595959" font-family="Liberation Sans" textLength="170.4" lengthAdjust="spacingAndGlyphs">Название диаграммы</text><rect x="264.3" y="601" width="6" height="6" fill="#5B9BD5"/><text x="273.8" y="608" font-size="11" fill="#595959" font-family="Liberation Sans" textLength="51.6" lengthAdjust="spacingAndGlyphs">1 четверть</text><rect x="341.2" y="601" width="6" height="6" fill="#ED7D31"/><text x="350.7" y="608" font-size="11" fill="#595959" font-family="Liberation Sans" textLength="51.6" lengthAdjust="spacingAndGlyphs">2 четверть</text><rect x="418.1" y="601" width="6" height="6" fill="#A5A5A5"/><text x="427.6" y="608" font-size="11" fill="#595959" font-family="Liberation Sans" textLength="51.6" lengthAdjust="spacingAndGlyphs">3 четверть</text><rect x="495.0" y="601" width="6" height="6" fill="#FFC000"/><text x="504.5" y="608" font-size="11" fill="#595959" font-family="Liberation Sans" textLength="51.6" lengthAdjust="spacingAndGlyphs">4 четверть</text><rect x="91.5" y="243.5" width="635" height="381" fill="none" stroke="#8C8C8C" stroke-width="1"/><circle cx="91.5" cy="243.5" r="4.6" fill="#fff" stroke="#8C8C8C" stroke-width="1.8"/><circle cx="408.5" cy="243.5" r="4.6" fill="#fff" stroke="#8C8C8C" stroke-width="1.8"/><circle cx="726.5" cy="243.5" r="4.6" fill="#fff" stroke="#8C8C8C" stroke-width="1.8"/><circle cx="91.5" cy="434" r="4.6" fill="#fff" stroke="#8C8C8C" stroke-width="1.8"/><circle cx="726.5" cy="434" r="4.6" fill="#fff" stroke="#8C8C8C" stroke-width="1.8"/><circle cx="91.5" cy="624.5" r="4.6" fill="#fff" stroke="#8C8C8C" stroke-width="1.8"/><circle cx="408.5" cy="624.5" r="4.6" fill="#fff" stroke="#8C8C8C" stroke-width="1.8"/><circle cx="726.5" cy="624.5" r="4.6" fill="#fff" stroke="#8C8C8C" stroke-width="1.8"/></svg><svg style="left:740px;top:242px;" width="28" height="142" viewBox="0 0 28 142">
<g fill="#fff" stroke="#ABABAB" stroke-width="1">
<rect x="0.5" y="0.5" width="27" height="27"/><rect x="0.5" y="38.5" width="27" height="27"/>
<rect x="0.5" y="76.5" width="27" height="27"/><rect x="0.5" y="114.5" width="27" height="27"/>
</g>
<path d="M4 5.9 h20 M4 8.8 h20 M4 11.9 h3 M21 11.9 h3 M4 15 h3 M21 15 h3 M4 17.9 h3 M21 17.9 h3 M4 21 h20 M4 24.1 h20" stroke="#3B6DB5" stroke-width="1.1"/>
<path d="M9.6 18 a4.5 4.5 0 0 1 9 0" fill="none" stroke="#636363" stroke-width="3"/>
<path d="M14.1 45 v13.8 M7.1 51.9 h13.9" stroke="#579E84" stroke-width="3.8"/>
<path d="M23.5 81 L24 86 L19 90.5 L16.5 88 Z" fill="#666"/>
<path d="M15.8 89.2 L18.2 91.6 L16.6 93.2 L14.2 90.8 Z" fill="#666"/>
<path d="M5.5 97.8 C8 94 10.5 92 13 91.5 C15.5 91 17.2 93 16 95 C14.5 97.2 11 97.8 5.5 97.8 Z" fill="#3B78C2"/>
<path d="M12.3 93.6 c0.8 -0.9 2.6 -0.9 3 0.4 c-0.4 1.1 -1.8 1.3 -2.6 1 z" fill="#fff"/>
<path d="M5 120 H23 V122.5 L16.2 129.5 V135.3 H12.4 V129.5 L5 122.5 Z" fill="#6E6E6E"/>
<path d="M7.2 122 L13.8 128.8 V134.5" fill="none" stroke="#fff" stroke-width="1.1"/>
</svg><div style="position:absolute;left:6px;top:110px;width:188px;height:237px;background:#FFFFFF;box-sizing:border-box;border-right:1px solid #C6C6C6;border-bottom:1px solid #C6C6C6;"></div><div style="position:absolute;left:6px;top:347px;width:190px;height:22px;background:linear-gradient(rgba(0,0,0,0.20), rgba(0,0,0,0.10) 45%, rgba(0,0,0,0));"></div><svg style="left:11px;top:115px;" width="48" height="48" viewBox="0 0 48 48"><rect x="0.5" y="0.5" width="47" height="47" fill="#fff" stroke="#A6A6A6" stroke-width="1"/><rect x="12" y="4" width="24" height="3" fill="#A3A3A3"/><path d="M8 14.5 H34" stroke="#ABABAB" stroke-width="1"/><path d="M8 19.5 H34" stroke="#ABABAB" stroke-width="1"/><path d="M8 26.5 H34" stroke="#ABABAB" stroke-width="1"/><path d="M8 31.5 H34" stroke="#ABABAB" stroke-width="1"/><path d="M3 17.5 H6" stroke="#8A8A8A" stroke-width="1"/><path d="M3 24.5 H6" stroke="#8A8A8A" stroke-width="1"/><path d="M3 29.5 H6" stroke="#8A8A8A" stroke-width="1"/><path d="M3 36.5 H6" stroke="#8A8A8A" stroke-width="1"/><path d="M8 38.5 H34" stroke="#5E5E5E" stroke-width="1"/><rect x="10.5" y="23.5" width="3" height="15" fill="#FFFFFF" stroke="#5E5E5E" stroke-width="1"/><rect x="14.5" y="18.5" width="4" height="20" fill="#CFCFCF" stroke="#5E5E5E" stroke-width="1"/><rect x="22.5" y="21.5" width="3" height="17" fill="#FFFFFF" stroke="#5E5E5E" stroke-width="1"/><rect x="26.5" y="27.5" width="3" height="11" fill="#CFCFCF" stroke="#5E5E5E" stroke-width="1"/><path d="M11 40.5 H17" stroke="#9A9A9A" stroke-width="1"/><path d="M22 40.5 H28" stroke="#9A9A9A" stroke-width="1"/><rect x="37.5" y="19.5" width="8" height="11" fill="#fff" stroke="#5E5E5E" stroke-width="1"/><path d="M39 22.5 h1.5 M41.5 22.5 h2.5" stroke="#666" stroke-width="1"/><path d="M39 25.5 h1.5 M41.5 25.5 h2.5" stroke="#666" stroke-width="1"/><path d="M39 28.5 h1.5 M41.5 28.5 h2.5" stroke="#666" stroke-width="1"/></svg><svg style="left:67px;top:115px;" width="48" height="48" viewBox="0 0 48 48"><rect x="0.5" y="0.5" width="47" height="47" fill="#fff" stroke="#A6A6A6" stroke-width="1"/><rect x="12" y="4" width="24" height="3" fill="#A3A3A3"/><rect x="12.5" y="10.5" width="23" height="4" fill="#fff" stroke="#5E5E5E" stroke-width="1"/><path d="M14.0 12.5 h1.5 M16.5 12.5 h3.2" stroke="#666" stroke-width="1"/><path d="M20.7 12.5 h1.5 M23.2 12.5 h3.2" stroke="#666" stroke-width="1"/><path d="M27.3 12.5 h1.5 M29.8 12.5 h3.2" stroke="#666" stroke-width="1"/><path d="M5 38.5 H43" stroke="#5E5E5E" stroke-width="1"/><rect x="9.5" y="26.5" width="3" height="12" fill="#FFFFFF" stroke="#5E5E5E" stroke-width="1"/><rect x="15.5" y="21.5" width="4" height="17" fill="#CFCFCF" stroke="#5E5E5E" stroke-width="1"/><rect x="28.5" y="24.5" width="3" height="14" fill="#FFFFFF" stroke="#5E5E5E" stroke-width="1"/><rect x="34.5" y="29.5" width="4" height="9" fill="#CFCFCF" stroke="#5E5E5E" stroke-width="1"/><path d="M8 24.5 H14" stroke="#4A4A4A" stroke-width="1"/><path d="M14 19.5 H20" stroke="#4A4A4A" stroke-width="1"/><path d="M28 22.5 H33" stroke="#4A4A4A" stroke-width="1"/><path d="M34 27.5 H39" stroke="#4A4A4A" stroke-width="1"/><path d="M9 40.5 H15" stroke="#9A9A9A" stroke-width="1"/><path d="M32 40.5 H39" stroke="#9A9A9A" stroke-width="1"/></svg><svg style="left:123px;top:115px;" width="48" height="48" viewBox="0 0 48 48"><rect x="0.5" y="0.5" width="47" height="47" fill="#fff" stroke="#A6A6A6" stroke-width="1"/><rect x="12" y="4" width="24" height="3" fill="#A3A3A3"/><path d="M7 12.5 H45" stroke="#ABABAB" stroke-width="1"/><path d="M7 19.5 H45" stroke="#ABABAB" stroke-width="1"/><path d="M7 26.5 H45" stroke="#ABABAB" stroke-width="1"/><path d="M3 12.5 H6" stroke="#8A8A8A" stroke-width="1"/><path d="M3 17.5 H6" stroke="#8A8A8A" stroke-width="1"/><path d="M3 24.5 H6" stroke="#8A8A8A" stroke-width="1"/><path d="M3 30.5 H6" stroke="#8A8A8A" stroke-width="1"/><path d="M7 31.5 H45" stroke="#5E5E5E" stroke-width="1"/><rect x="10.5" y="21.5" width="3" height="10" fill="#FFFFFF" stroke="#5E5E5E" stroke-width="1"/><rect x="16.5" y="14.5" width="3" height="17" fill="#CFCFCF" stroke="#5E5E5E" stroke-width="1"/><rect x="29.5" y="15.5" width="3" height="16" fill="#FFFFFF" stroke="#5E5E5E" stroke-width="1"/><rect x="35.5" y="22.5" width="4" height="9" fill="#CFCFCF" stroke="#5E5E5E" stroke-width="1"/><path d="M12 34.5 H19" stroke="#9A9A9A" stroke-width="1"/><path d="M32 34.5 H39" stroke="#9A9A9A" stroke-width="1"/><rect x="12.5" y="38.5" width="23" height="4" fill="#fff" stroke="#5E5E5E" stroke-width="1"/><path d="M14.0 40.5 h1.5 M16.5 40.5 h3.2" stroke="#666" stroke-width="1"/><path d="M20.7 40.5 h1.5 M23.2 40.5 h3.2" stroke="#666" stroke-width="1"/><path d="M27.3 40.5 h1.5 M29.8 40.5 h3.2" stroke="#666" stroke-width="1"/></svg><svg style="left:11px;top:171px;" width="48" height="48" viewBox="0 0 48 48"><rect x="0.5" y="0.5" width="47" height="47" fill="#fff" stroke="#A6A6A6" stroke-width="1"/><path d="M7.5 5 V31" stroke="#5E5E5E" stroke-width="1"/><path d="M3 8.5 H6" stroke="#8A8A8A" stroke-width="1"/><path d="M3 14.5 H6" stroke="#8A8A8A" stroke-width="1"/><path d="M3 20.5 H6" stroke="#8A8A8A" stroke-width="1"/><path d="M3 26.5 H6" stroke="#8A8A8A" stroke-width="1"/><path d="M7 31.5 H40" stroke="#5E5E5E" stroke-width="1"/><rect x="12.5" y="18.5" width="3" height="13" fill="#FFFFFF" stroke="#5E5E5E" stroke-width="1"/><rect x="16.5" y="12.5" width="3" height="19" fill="#CFCFCF" stroke="#5E5E5E" stroke-width="1"/><rect x="29.5" y="15.5" width="3" height="16" fill="#FFFFFF" stroke="#5E5E5E" stroke-width="1"/><rect x="33.5" y="26.5" width="3" height="5" fill="#CFCFCF" stroke="#5E5E5E" stroke-width="1"/><path d="M12 16.5 H16" stroke="#4A4A4A" stroke-width="1"/><path d="M16 10.5 H21" stroke="#4A4A4A" stroke-width="1"/><path d="M28 13.5 H34" stroke="#4A4A4A" stroke-width="1"/><path d="M33 24.5 H38" stroke="#4A4A4A" stroke-width="1"/><path d="M13 34.5 H20" stroke="#9A9A9A" stroke-width="1"/><path d="M30 34.5 H37" stroke="#9A9A9A" stroke-width="1"/><rect x="13.5" y="38.5" width="22" height="4" fill="#fff" stroke="#5E5E5E" stroke-width="1"/><path d="M15.0 40.5 h1.5 M17.5 40.5 h2.8" stroke="#666" stroke-width="1"/><path d="M21.3 40.5 h1.5 M23.8 40.5 h2.8" stroke="#666" stroke-width="1"/><path d="M27.7 40.5 h1.5 M30.2 40.5 h2.8" stroke="#666" stroke-width="1"/></svg><svg style="left:67px;top:171px;" width="48" height="48" viewBox="0 0 48 48"><rect x="0.5" y="0.5" width="47" height="47" fill="#fff" stroke="#A6A6A6" stroke-width="1"/><rect x="12" y="4" width="24" height="3" fill="#A3A3A3"/><rect x="2" y="15" width="2" height="13" fill="#A3A3A3"/><path d="M9 11.5 H46" stroke="#ABABAB" stroke-width="1"/><path d="M9 16.5 H46" stroke="#ABABAB" stroke-width="1"/><path d="M9 21.5 H46" stroke="#ABABAB" stroke-width="1"/><path d="M9 26.5 H46" stroke="#ABABAB" stroke-width="1"/><path d="M5 13.5 H8" stroke="#8A8A8A" stroke-width="1"/><path d="M5 18.5 H8" stroke="#8A8A8A" stroke-width="1"/><path d="M5 24.5 H8" stroke="#8A8A8A" stroke-width="1"/><path d="M5 28.5 H8" stroke="#8A8A8A" stroke-width="1"/><path d="M9 31.5 H46" stroke="#5E5E5E" stroke-width="1"/><rect x="13.5" y="23.5" width="3" height="8" fill="#FFFFFF" stroke="#5E5E5E" stroke-width="1"/><rect x="17.5" y="13.5" width="3" height="18" fill="#CFCFCF" stroke="#5E5E5E" stroke-width="1"/><rect x="31.5" y="18.5" width="3" height="13" fill="#FFFFFF" stroke="#5E5E5E" stroke-width="1"/><rect x="35.5" y="23.5" width="3" height="8" fill="#CFCFCF" stroke="#5E5E5E" stroke-width="1"/><rect x="2.5" y="31.5" width="42" height="10" fill="#fff" stroke="#5E5E5E" stroke-width="1"/><path d="M2.5 36.5 H44.5 M8.5 31.5 V41.5 M26.5 31.5 V41.5" stroke="#5E5E5E" stroke-width="1"/><path d="M4 34 h3 M4 39 h3 M13 34 h8 M13 39 h8 M31 34 h8 M31 39 h8" stroke="#666" stroke-width="1"/></svg><svg style="left:123px;top:171px;" width="48" height="48" viewBox="0 0 48 48"><rect x="0.5" y="0.5" width="47" height="47" fill="#fff" stroke="#A6A6A6" stroke-width="1"/><rect x="12" y="4" width="24" height="3" fill="#A3A3A3"/><rect x="2" y="19" width="2" height="13" fill="#A3A3A3"/><path d="M9 13.5 H44" stroke="#ABABAB" stroke-width="1"/><path d="M9 19.5 H44" stroke="#ABABAB" stroke-width="1"/><path d="M9 25.5 H44" stroke="#ABABAB" stroke-width="1"/><path d="M9 31.5 H44" stroke="#ABABAB" stroke-width="1"/><path d="M5 16.5 H8" stroke="#8A8A8A" stroke-width="1"/><path d="M5 22.5 H8" stroke="#8A8A8A" stroke-width="1"/><path d="M5 28.5 H8" stroke="#8A8A8A" stroke-width="1"/><path d="M5 34.5 H8" stroke="#8A8A8A" stroke-width="1"/><path d="M9 37.5 H40" stroke="#5E5E5E" stroke-width="1"/><rect x="14.5" y="23.5" width="3" height="14" fill="#FFFFFF" stroke="#5E5E5E" stroke-width="1"/><rect x="18.5" y="16.5" width="3" height="21" fill="#CFCFCF" stroke="#5E5E5E" stroke-width="1"/><rect x="30.5" y="21.5" width="2" height="16" fill="#FFFFFF" stroke="#5E5E5E" stroke-width="1"/><rect x="33.5" y="27.5" width="4" height="10" fill="#CFCFCF" stroke="#5E5E5E" stroke-width="1"/><path d="M24 16.5 H28" stroke="#4A4A4A" stroke-width="1"/><path d="M30 16.5 H34" stroke="#4A4A4A" stroke-width="1"/><path d="M35 21.5 H40" stroke="#4A4A4A" stroke-width="1"/><path d="M41 21.5 H45" stroke="#4A4A4A" stroke-width="1"/><path d="M14 40.5 H21" stroke="#9A9A9A" stroke-width="1"/><path d="M31 40.5 H38" stroke="#9A9A9A" stroke-width="1"/></svg><svg style="left:11px;top:227px;" width="48" height="48" viewBox="0 0 48 48"><rect x="0.5" y="0.5" width="47" height="47" fill="#fff" stroke="#A6A6A6" stroke-width="1"/><rect x="2" y="18" width="2" height="13" fill="#A3A3A3"/><path d="M9 10.5 H36" stroke="#ABABAB" stroke-width="1"/><path d="M9 16.5 H36" stroke="#ABABAB" stroke-width="1"/><path d="M9 22.5 H36" stroke="#ABABAB" stroke-width="1"/><path d="M9 28.5 H36" stroke="#ABABAB" stroke-width="1"/><path d="M9 13.5 H36" stroke="#ABABAB" stroke-width="1" stroke-dasharray="2 1"/><path d="M9 19.5 H36" stroke="#ABABAB" stroke-width="1" stroke-dasharray="2 1"/><path d="M9 26.5 H36" stroke="#ABABAB" stroke-width="1" stroke-dasharray="2 1"/><path d="M9 31.5 H36" stroke="#ABABAB" stroke-width="1" stroke-dasharray="2 1"/><path d="M9.5 10 V34" stroke="#5E5E5E" stroke-width="1"/><path d="M5 13.5 H8" stroke="#8A8A8A" stroke-width="1"/><path d="M5 19.5 H8" stroke="#8A8A8A" stroke-width="1"/><path d="M5 25.5 H8" stroke="#8A8A8A" stroke-width="1"/><path d="M5 31.5 H8" stroke="#8A8A8A" stroke-width="1"/><path d="M9 34.5 H36" stroke="#5E5E5E" stroke-width="1"/><rect x="12.5" y="23.5" width="3" height="11" fill="#FFFFFF" stroke="#5E5E5E" stroke-width="1"/><rect x="16.5" y="14.5" width="3" height="20" fill="#CFCFCF" stroke="#5E5E5E" stroke-width="1"/><rect x="25.5" y="20.5" width="3" height="14" fill="#FFFFFF" stroke="#5E5E5E" stroke-width="1"/><rect x="30.5" y="23.5" width="2" height="11" fill="#CFCFCF" stroke="#5E5E5E" stroke-width="1"/><path d="M13 37.5 H20" stroke="#9A9A9A" stroke-width="1"/><path d="M25 37.5 H32" stroke="#9A9A9A" stroke-width="1"/><rect x="37.5" y="17.5" width="7" height="10" fill="#fff" stroke="#5E5E5E" stroke-width="1"/><path d="M39 20.5 h1.5 M41.5 20.5 h1.5" stroke="#666" stroke-width="1"/><path d="M39 23.5 h1.5 M41.5 23.5 h1.5" stroke="#666" stroke-width="1"/><path d="M39 26.5 h1.5 M41.5 26.5 h1.5" stroke="#666" stroke-width="1"/><rect x="11.8" y="42.4" width="21" height="1.8" fill="#A3A3A3"/></svg><svg style="left:67px;top:227px;" width="48" height="48" viewBox="0 0 48 48"><rect x="0.5" y="0.5" width="47" height="47" fill="#fff" stroke="#A6A6A6" stroke-width="1"/><rect x="12" y="4" width="24" height="3" fill="#A3A3A3"/><path d="M8.5 10 V34" stroke="#5E5E5E" stroke-width="1"/><path d="M4 14.5 H6" stroke="#8A8A8A" stroke-width="1"/><path d="M4 20.5 H6" stroke="#8A8A8A" stroke-width="1"/><path d="M4 26.5 H6" stroke="#8A8A8A" stroke-width="1"/><path d="M4 32.5 H6" stroke="#8A8A8A" stroke-width="1"/><path d="M8 34.5 H44" stroke="#5E5E5E" stroke-width="1"/><rect x="11.5" y="29.5" width="4" height="5" fill="#CFCFCF" stroke="#5E5E5E" stroke-width="1"/><rect x="16.5" y="25.5" width="4" height="9" fill="#CFCFCF" stroke="#5E5E5E" stroke-width="1"/><rect x="21.5" y="21.5" width="4" height="13" fill="#CFCFCF" stroke="#5E5E5E" stroke-width="1"/><rect x="26.5" y="29.5" width="3" height="5" fill="#CFCFCF" stroke="#5E5E5E" stroke-width="1"/><rect x="30.5" y="26.5" width="4" height="8" fill="#CFCFCF" stroke="#5E5E5E" stroke-width="1"/><rect x="35.5" y="24.5" width="4" height="10" fill="#CFCFCF" stroke="#5E5E5E" stroke-width="1"/><path d="M12 37.5 H15" stroke="#9A9A9A" stroke-width="1"/><path d="M17 37.5 H20" stroke="#9A9A9A" stroke-width="1"/><path d="M22 37.5 H26" stroke="#9A9A9A" stroke-width="1"/><path d="M28 37.5 H31" stroke="#9A9A9A" stroke-width="1"/><path d="M33 37.5 H36" stroke="#9A9A9A" stroke-width="1"/><path d="M38 37.5 H42" stroke="#9A9A9A" stroke-width="1"/><rect x="14" y="42.4" width="20.7" height="1.8" fill="#A3A3A3"/></svg><svg style="left:123px;top:227px;" width="48" height="48" viewBox="0 0 48 48"><rect x="0.5" y="0.5" width="47" height="47" fill="#fff" stroke="#A6A6A6" stroke-width="1"/><rect x="12" y="4" width="24" height="3" fill="#A3A3A3"/><rect x="2" y="16" width="2" height="14" fill="#A3A3A3"/><path d="M8 11.5 H34" stroke="#ABABAB" stroke-width="1"/><path d="M8 17.5 H34" stroke="#ABABAB" stroke-width="1"/><path d="M8 23.5 H34" stroke="#ABABAB" stroke-width="1"/><path d="M8 29.5 H34" stroke="#ABABAB" stroke-width="1"/><path d="M4 14.5 H7" stroke="#8A8A8A" stroke-width="1"/><path d="M4 20.5 H7" stroke="#8A8A8A" stroke-width="1"/><path d="M4 26.5 H7" stroke="#8A8A8A" stroke-width="1"/><path d="M4 32.5 H7" stroke="#8A8A8A" stroke-width="1"/><path d="M8 35.5 H34" stroke="#5E5E5E" stroke-width="1"/><rect x="11.5" y="20.5" width="3" height="15" fill="#FFFFFF" stroke="#5E5E5E" stroke-width="1"/><rect x="15.5" y="14.5" width="4" height="21" fill="#CFCFCF" stroke="#5E5E5E" stroke-width="1"/><rect x="22.5" y="19.5" width="4" height="16" fill="#FFFFFF" stroke="#5E5E5E" stroke-width="1"/><rect x="27.5" y="25.5" width="2" height="10" fill="#CFCFCF" stroke="#5E5E5E" stroke-width="1"/><path d="M12 38.5 H18" stroke="#9A9A9A" stroke-width="1"/><path d="M23 38.5 H29" stroke="#9A9A9A" stroke-width="1"/><rect x="36.5" y="17.5" width="8" height="10" fill="#fff" stroke="#5E5E5E" stroke-width="1"/><path d="M38 20.5 h1.5 M40.5 20.5 h2.5" stroke="#666" stroke-width="1"/><path d="M38 23.5 h1.5 M40.5 23.5 h2.5" stroke="#666" stroke-width="1"/><path d="M38 26.5 h1.5 M40.5 26.5 h2.5" stroke="#666" stroke-width="1"/><rect x="13.1" y="42.4" width="20.7" height="1.8" fill="#A3A3A3"/></svg><svg style="left:11px;top:283px;" width="48" height="48" viewBox="0 0 48 48"><rect x="0.5" y="0.5" width="47" height="47" fill="#fff" stroke="#A6A6A6" stroke-width="1"/><rect x="12" y="4" width="24" height="3" fill="#A3A3A3"/><path d="M6 13.5 H35" stroke="#ABABAB" stroke-width="1"/><path d="M6 19.5 H35" stroke="#ABABAB" stroke-width="1"/><path d="M6 24.5 H35" stroke="#ABABAB" stroke-width="1"/><path d="M6 30.5 H35" stroke="#ABABAB" stroke-width="1"/><path d="M4 16.5 H6" stroke="#8A8A8A" stroke-width="1"/><path d="M4 22.5 H6" stroke="#8A8A8A" stroke-width="1"/><path d="M4 27.5 H6" stroke="#8A8A8A" stroke-width="1"/><path d="M4 33.5 H6" stroke="#8A8A8A" stroke-width="1"/><path d="M6 37.5 H35" stroke="#5E5E5E" stroke-width="1"/><rect x="8.5" y="24.5" width="3" height="13" fill="#CFCFCF" stroke="#5E5E5E" stroke-width="1"/><rect x="11.5" y="17.5" width="6" height="20" fill="#FFFFFF" stroke="#5E5E5E" stroke-width="1"/><path d="M13 23.5 H16" stroke="#4A4A4A" stroke-width="1"/><rect x="22.5" y="21.5" width="6" height="16" fill="#CFCFCF" stroke="#5E5E5E" stroke-width="1"/><rect x="25.5" y="27.5" width="6" height="10" fill="#FFFFFF" stroke="#5E5E5E" stroke-width="1"/><path d="M27 31.5 H31" stroke="#4A4A4A" stroke-width="1"/><path d="M9 40.5 H16" stroke="#9A9A9A" stroke-width="1"/><path d="M24 40.5 H31" stroke="#9A9A9A" stroke-width="1"/><rect x="36.5" y="19.5" width="8" height="10" fill="#fff" stroke="#5E5E5E" stroke-width="1"/><path d="M38 22.5 h1.5 M40.5 22.5 h2.5" stroke="#666" stroke-width="1"/><path d="M38 25.5 h1.5 M40.5 25.5 h2.5" stroke="#666" stroke-width="1"/><path d="M38 28.5 h1.5 M40.5 28.5 h2.5" stroke="#666" stroke-width="1"/></svg><svg style="left:67px;top:283px;" width="48" height="48" viewBox="0 0 48 48"><rect x="0.5" y="0.5" width="47" height="47" fill="#fff" stroke="#A6A6A6" stroke-width="1"/><path d="M6 13.5 H35" stroke="#ABABAB" stroke-width="1"/><path d="M6 19.5 H35" stroke="#ABABAB" stroke-width="1"/><path d="M6 24.5 H35" stroke="#ABABAB" stroke-width="1"/><path d="M6 30.5 H35" stroke="#ABABAB" stroke-width="1"/><path d="M3 18.5 H6" stroke="#8A8A8A" stroke-width="1"/><path d="M3 24.5 H6" stroke="#8A8A8A" stroke-width="1"/><path d="M3 30.5 H6" stroke="#8A8A8A" stroke-width="1"/><path d="M3 36.5 H6" stroke="#8A8A8A" stroke-width="1"/><path d="M6 37.5 H35" stroke="#5E5E5E" stroke-width="1"/><rect x="10.5" y="22.5" width="3" height="15" fill="#FFFFFF" stroke="#5E5E5E" stroke-width="1"/><rect x="14.5" y="16.5" width="3" height="21" fill="#CFCFCF" stroke="#5E5E5E" stroke-width="1"/><rect x="22.5" y="21.5" width="3" height="16" fill="#FFFFFF" stroke="#5E5E5E" stroke-width="1"/><rect x="26.5" y="27.5" width="3" height="10" fill="#CFCFCF" stroke="#5E5E5E" stroke-width="1"/><path d="M10 40.5 H17" stroke="#9A9A9A" stroke-width="1"/><path d="M23 40.5 H30" stroke="#9A9A9A" stroke-width="1"/><rect x="36.5" y="19.5" width="8" height="10" fill="#fff" stroke="#5E5E5E" stroke-width="1"/><path d="M38 22.5 h1.5 M40.5 22.5 h2.5" stroke="#666" stroke-width="1"/><path d="M38 25.5 h1.5 M40.5 25.5 h2.5" stroke="#666" stroke-width="1"/><path d="M38 28.5 h1.5 M40.5 28.5 h2.5" stroke="#666" stroke-width="1"/></svg><svg style="left:0px;top:0px;" width="871" height="731" viewBox="0 0 871 731">
<defs>
<filter id="sh" x="-20%" y="-20%" width="150%" height="160%"><feGaussianBlur in="SourceAlpha" stdDeviation="2.2"/><feOffset dx="1.5" dy="3" result="b"/><feComponentTransfer><feFuncA type="linear" slope="0.45"/></feComponentTransfer><feMerge><feMergeNode/><feMergeNode in="SourceGraphic"/></feMerge></filter>
<filter id="sh2" x="-10%" y="-10%" width="130%" height="130%"><feGaussianBlur in="SourceAlpha" stdDeviation="1.5"/><feOffset dx="1" dy="2" result="b"/><feComponentTransfer><feFuncA type="linear" slope="0.35"/></feComponentTransfer><feMerge><feMergeNode/><feMergeNode in="SourceGraphic"/></feMerge></filter>
</defs>
<g filter="url(#sh2)">
<path d="M468 29 H600 V69 H468 Z M471 32 V66 H597 V32 Z" fill="#F03C3F" fill-rule="evenodd"/>
<path d="M3 110 H199 V357 H3 Z M6 113 V354 H196 V113 Z" fill="#F03C3F" fill-rule="evenodd"/>
<path d="M121.3 101.8 L150.8 86.9 L150.8 97.2 L320 94.7 L320 105 L150.8 107.6 L150.8 116.5 Z" fill="#F03C3F"/>
</g>
<g filter="url(#sh)">
<circle cx="589.2" cy="48.9" r="27.7" fill="#0EAD8A"/>
<circle cx="335" cy="98.9" r="27.7" fill="#0EAD8A"/>
<circle cx="206" cy="341.8" r="27.7" fill="#0EAD8A"/>
</g>
<path d="M589.6 35 H593 V63.9 H589.1 V41.2 L581.8 45.9 V41.7 Z" fill="#fff"/>
<g font-family="Liberation Sans" font-size="41" fill="#fff" stroke="#fff" stroke-width="0.5" text-anchor="middle">
<text x="335" y="114.4">2</text>
<text x="206" y="357.3">3</text>
</g>
</svg><svg style="left:20px;top:650px;" width="270" height="60" viewBox="0 0 270 60">
<g opacity="0.55">
<rect x="2.5" y="4.5" width="64" height="51" rx="7" fill="rgba(255,255,255,0.35)" stroke="#C8C8C8" stroke-width="1"/>
<rect x="6.5" y="8.5" width="56" height="43" rx="5" fill="none" stroke="#A6A6A6" stroke-width="4"/>
<rect x="22.5" y="53.5" width="20" height="4" rx="2" fill="none" stroke="#C8C8C8" stroke-width="1"/>
<path d="M13 15 l22 21" stroke="#8F8F8F" stroke-width="3.2" stroke-linecap="round"/>
<path d="M10 11.5 l13.5 2.5 l-11 10z" fill="#8F8F8F"/>
</g>
<g transform="translate(-20 -650)">
<g fill="none" stroke-linecap="round" stroke-linejoin="round">
<g stroke="#F5A3B4" stroke-width="6.5" opacity="0.85">
<rect x="97" y="671.5" width="19" height="18" rx="6"/>
<path d="M142.5 671.5 H128.5 Q123 671.5 123 676.5 Q123 680.5 128.5 680.5 H138 Q143.5 680.5 143.5 685.2 Q143.5 689.5 138 689.5 H123"/>
</g>
<g stroke="#C9C9C9" stroke-width="6.2" opacity="0.8">
<path d="M161.5 670 V690 M178 670 V690 M161.5 680 H178"/>
<path d="M186.5 682 H203 Q203 674.5 195 674.5 Q186.5 674.5 186.5 682 Q186.5 690 195 690 H201.5"/>
<path d="M210 668.5 V690"/>
<path d="M218 695.5 V674.5 H227.5 Q235.5 674.5 235.5 682.2 Q235.5 690 227.5 690 H220"/>
<path d="M242 682 H258.5 Q258.5 674.5 250.5 674.5 Q242 674.5 242 682 Q242 690 250.5 690 H257"/>
<path d="M265.5 690 V674.5 H278"/>
</g>
<g stroke="#FFFFFF" stroke-width="3.2">
<path d="M161.5 670 V690 M178 670 V690 M161.5 680 H178"/>
<path d="M186.5 682 H203 Q203 674.5 195 674.5 Q186.5 674.5 186.5 682 Q186.5 690 195 690 H201.5"/>
<path d="M210 668.5 V690"/>
<path d="M218 695.5 V674.5 H227.5 Q235.5 674.5 235.5 682.2 Q235.5 690 227.5 690 H220"/>
<path d="M242 682 H258.5 Q258.5 674.5 250.5 674.5 Q242 674.5 242 682 Q242 690 250.5 690 H257"/>
<path d="M265.5 690 V674.5 H278"/>
</g>
<g stroke="#FAC3CE" stroke-width="2.2" opacity="0.8">
<rect x="97" y="671.5" width="19" height="18" rx="6"/>
<path d="M142.5 671.5 H128.5 Q123 671.5 123 676.5 Q123 680.5 128.5 680.5 H138 Q143.5 680.5 143.5 685.2 Q143.5 689.5 138 689.5 H123"/>
</g>
</g>
</g>

</svg><div style="position:absolute;left:0px;top:35px;width:1px;height:696px;background:#2B579A;"></div><div style="position:absolute;left:870px;top:35px;width:1px;height:696px;background:#2B579A;"></div></body></html>
